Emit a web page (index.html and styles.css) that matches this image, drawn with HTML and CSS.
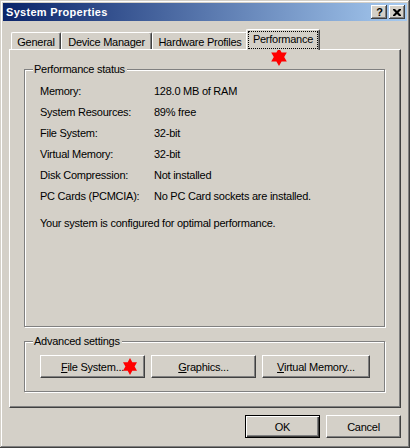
FILE: index.html
```html
<!DOCTYPE html>
<html>
<head>
<meta charset="utf-8">
<title>System Properties</title>
<link rel="stylesheet" href="styles.css">
</head>
<body>
<div class="window">
  <div class="titlebar">
    <span class="title">System Properties</span>
    <div class="title-buttons">
      <span class="tbtn help">?</span>
      <span class="tbtn close">
        <svg width="8" height="7" viewBox="0 0 8 7"><path d="M0 0h2l2 2 2-2h2v1l-2.5 2.5L8 6v1H6L4 5 2 7H0V6l2.5-2.5L0 1z" fill="#000"/></svg>
      </span>
    </div>
  </div>
  <div class="content">
    <div class="tabs">
      <div class="tab t-general">General</div>
      <div class="tab t-device">Device Manager</div>
      <div class="tab t-hardware">Hardware Profiles</div>
      <div class="tab t-perf active"><span class="focus">Performance</span></div>
    </div>
    <div class="panel">
      <div class="group group-status">
        <span class="group-label">Performance status</span>
        <div class="row"><span class="k">Memory:</span><span class="v">128.0 MB of RAM</span></div>
        <div class="row"><span class="k">System Resources:</span><span class="v">89% free</span></div>
        <div class="row"><span class="k">File System:</span><span class="v">32-bit</span></div>
        <div class="row"><span class="k">Virtual Memory:</span><span class="v">32-bit</span></div>
        <div class="row"><span class="k">Disk Compression:</span><span class="v">Not installed</span></div>
        <div class="row"><span class="k">PC Cards (PCMCIA):</span><span class="v">No PC Card sockets are installed.</span></div>
        <div class="row note">Your system is configured for optimal performance.</div>
      </div>
      <div class="group group-adv">
        <span class="group-label">Advanced settings</span>
        <div class="btn-row">
          <button class="btn b-fs"><u>F</u>ile System...</button>
          <button class="btn b-gr"><u>G</u>raphics...</button>
          <button class="btn b-vm"><u>V</u>irtual Memory...</button>
        </div>
      </div>
    </div>
    <div class="footer">
      <button class="btn default">OK</button>
      <button class="btn">Cancel</button>
    </div>
  </div>
  <svg class="star star-tab" width="18" height="18" viewBox="-9 -9 18 18"><polygon points="0,-9 2.6,-4.5 7.8,-4.5 5.2,0 7.8,4.5 2.6,4.5 0,9 -2.6,4.5 -7.8,4.5 -5.2,0 -7.8,-4.5 -2.6,-4.5" fill="#ff0000"/></svg>
  <svg class="star star-btn" width="16" height="17" viewBox="-8 -8.5 16 17"><polygon points="0,-8.5 2.3,-4.2 7,-4.2 4.6,0 7,4.2 2.3,4.2 0,8.5 -2.3,4.2 -7,4.2 -4.6,0 -7,-4.2 -2.3,-4.2" fill="#ff0000"/></svg>
</div>
</body>
</html>
```

FILE: styles.css
```css
html, body {
  margin: 0;
  padding: 0;
  background: #d4d0c8;
  overflow: hidden;
}
body {
  font-family: "Liberation Sans", Arial, sans-serif;
  font-size: 11px;
  letter-spacing: -0.25px;
  color: #000;
}
.window {
  position: relative;
  box-sizing: border-box;
  width: 410px;
  height: 448px;
  padding: 3px;
  background: #d4d0c8;
  box-shadow: inset -1px -1px #404040, inset 1px 1px #d4d0c8, inset -2px -2px #808080, inset 2px 2px #ffffff;
}
.titlebar {
  height: 18px;
  display: flex;
  align-items: center;
  justify-content: space-between;
  background: linear-gradient(to right, #0a246a, #a6caf0);
  padding: 0 2px 0 3px;
}
.title {
  color: #fff;
  font-weight: bold;
  font-size: 11px;
  letter-spacing: 0.3px;
}
.title-buttons {
  display: flex;
  gap: 2px;
}
.tbtn {
  box-sizing: border-box;
  width: 16px;
  height: 14px;
  display: flex;
  align-items: center;
  justify-content: center;
  background: #d4d0c8;
  box-shadow: inset -1px -1px #404040, inset 1px 1px #ffffff, inset -2px -2px #808080;
  font-weight: bold;
  font-size: 11px;
  letter-spacing: 0;
  line-height: 14px;
}
.tbtn.help { padding-left: 1px; }
.content {
  padding: 8px 6px 0 6px;
}
.tabs {
  position: relative;
  z-index: 1;
  display: flex;
  align-items: flex-end;
  height: 20px;
  padding-left: 2px;
}
.tab {
  box-sizing: border-box;
  height: 17px;
  border-left: 1px solid #fff;
  border-top: 1px solid #fff;
  border-right: 1px solid #404040;
  border-radius: 2px 2px 0 0;
  box-shadow: inset -1px 0 #808080;
  background: #d4d0c8;
  text-align: center;
  line-height: 16px;
  padding-top: 1px;
}
.t-general { width: 50px; }
.t-device { width: 91px; }
.t-hardware { width: 96px; }
.t-perf { width: 70px; }
.tab.active {
  position: relative;
  width: 74px;
  height: 21px;
  margin: 0 -2px -1px -2px;
  padding: 1px 1px 0 1px;
  line-height: 16px;
}
.focus {
  display: block;
  box-sizing: border-box;
  height: 18px;
  border: 1px dotted #000;
  line-height: 15px;
}
.panel {
  box-sizing: border-box;
  height: 359px;
  border-top: 1px solid #fff;
  border-left: 1px solid #fff;
  border-right: 1px solid #404040;
  border-bottom: 1px solid #404040;
  box-shadow: inset -1px -1px #808080;
  padding: 19px 14px 0 14px;
}
.group {
  position: relative;
  box-sizing: border-box;
  border: 1px solid #808080;
  box-shadow: 1px 1px 0 #fff, inset 1px 1px 0 #fff;
  margin-right: 1px;
}
.group-label {
  position: absolute;
  top: -8px;
  left: 8px;
  padding: 0 2px 0 1px;
  background: #d4d0c8;
  line-height: 14px;
}
.group-status {
  height: 258px;
  padding: 11px 0 0 15px;
}
.row {
  display: flex;
  line-height: 21px;
  height: 21px;
}
.k { width: 114px; }
.note { margin-top: 6px; }
.group-adv {
  margin-top: 14px;
  height: 51px;
  padding: 13px 0 0 15px;
}
.btn-row {
  display: flex;
  gap: 6px;
}
.btn {
  box-sizing: border-box;
  height: 23px;
  padding: 0;
  margin: 0;
  font-family: inherit;
  font-size: 11px;
  letter-spacing: -0.25px;
  color: #000;
  background: #d4d0c8;
  border: 1px solid;
  border-color: #fff #404040 #404040 #fff;
  box-shadow: inset -1px -1px #808080;
  border-radius: 0;
  text-align: center;
  line-height: 20px;
}
.b-fs, .b-gr { width: 105px; }
.b-vm { width: 108px; }
.footer {
  display: flex;
  justify-content: flex-end;
  gap: 6px;
  margin-top: 7px;
}
.footer .btn { width: 75px; }
.btn.default {
  border: 1px solid #000;
  box-shadow: inset 1px 1px #fff, inset -1px -1px #404040, inset -2px -2px #808080;
}
.star {
  position: absolute;
}
.star-tab { left: 270px; top: 48px; }
.star-btn { left: 122px; top: 358px; }
```
